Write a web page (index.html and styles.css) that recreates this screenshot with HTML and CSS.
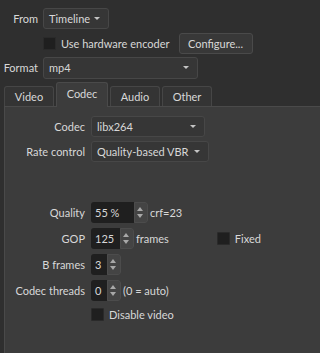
FILE: index.html
```html
<!DOCTYPE html>
<html lang="en">

<head>
    <meta charset="UTF-8">
    <meta name="viewport" content="width=device-width, initial-scale=1.0">
    <title>Export - Codec</title>
    <link rel="stylesheet" href="styles.css">
</head>

<body>
    <div class="top">
        <div class="row row-from">
            <span class="label">From</span>
            <div class="combo combo-from">Timeline <span class="arrow"></span></div>
        </div>
        <div class="row row-hw">
            <span class="check"></span>
            <span class="check-text">Use hardware encoder</span>
            <button class="btn">Configure...</button>
        </div>
        <div class="row row-format">
            <span class="label">Format</span>
            <div class="combo combo-format">mp4 <span class="arrow"></span></div>
        </div>
    </div>

    <div class="tabs">
        <div class="tab">Video</div>
        <div class="tab selected">Codec</div>
        <div class="tab">Audio</div>
        <div class="tab">Other</div>
    </div>

    <div class="pane">
        <!-- codec selection -->
        <div class="form form-codec">
            <span class="label">Codec</span>
            <div class="field">
                <div class="combo combo-codec">libx264 <span class="arrow"></span></div>
            </div>

            <span class="label">Rate control</span>
            <div class="field">
                <div class="combo combo-rate">Quality-based VBR <span class="arrow"></span></div>
            </div>
        </div>

        <!-- numeric settings -->
        <div class="form form-values">
            <span class="label">Quality</span>
            <div class="field">
                <div class="spin spin-quality"><span class="spin-value">55 %</span><span class="spin-btns"></span></div>
                <span class="suffix">crf=23</span>
            </div>

            <span class="label">GOP</span>
            <div class="field">
                <div class="spin spin-gop"><span class="spin-value">125</span><span class="spin-btns"></span></div>
                <span class="suffix">frames</span>
                <span class="check check-fixed"></span>
                <span class="check-text">Fixed</span>
            </div>

            <span class="label">B frames</span>
            <div class="field">
                <div class="spin spin-small"><span class="spin-value">3</span><span class="spin-btns"></span></div>
            </div>

            <span class="label">Codec threads</span>
            <div class="field">
                <div class="spin spin-small"><span class="spin-value">0</span><span class="spin-btns"></span></div>
                <span class="suffix">(0 = auto)</span>
            </div>

            <span class="label"></span>
            <div class="field field-check">
                <span class="check"></span>
                <span class="check-text">Disable video</span>
            </div>
        </div>
    </div>
</body>

</html>
```

FILE: styles.css
```css
body {
    margin: 0;
    padding: 0;
    background-color: #2f2f2f;
    color: #d8d8d8;
    font-family: Lato, "Open Sans", sans-serif;
    font-size: 11px;
    line-height: 14px;
    height: 353px;
    overflow: hidden;
    display: flex;
    flex-direction: column;
    white-space: nowrap;
}

.top {
    padding-top: 8px;
}

.row {
    display: flex;
    align-items: center;
}

.row .label {
    width: 38px;
    text-align: right;
    margin-right: 5px;
}

.row-from {
    height: 21px;
}

.row-hw {
    height: 21px;
    margin-top: 4px;
    padding-left: 43px;
}

.row-format {
    height: 22px;
    margin-top: 3px;
}

.combo {
    box-sizing: border-box;
    height: 21px;
    background: #363636;
    border: 1px solid #474747;
    border-radius: 3px;
    padding: 0 0 0 5px;
    display: flex;
    align-items: center;
    position: relative;
}

.arrow {
    position: absolute;
    right: 8px;
    top: 8px;
    width: 0;
    height: 0;
    border-left: 3px solid transparent;
    border-right: 3px solid transparent;
    border-top: 3px solid #c4c4c4;
}

.combo-from {
    width: 66px;
}

.combo-format {
    width: 155px;
    height: 22px;
}

.combo-codec {
    width: 114px;
}

.combo-rate {
    width: 118px;
}

.check {
    box-sizing: border-box;
    width: 13px;
    height: 13px;
    background: #1f1f1f;
    border: 1px solid #2a2a2a;
    border-radius: 1px;
    flex-shrink: 0;
}

.check-text {
    margin-left: 5px;
}

.btn {
    box-sizing: border-box;
    margin-left: 9px;
    height: 21px;
    width: 74px;
    padding: 0;
    background: #383838;
    border: 1px solid #4a4a4a;
    border-radius: 3px;
    color: #d8d8d8;
    font-family: inherit;
    font-size: inherit;
}

.tabs {
    display: flex;
    margin-top: 3px;
    padding-left: 4px;
    height: 24px;
    align-items: flex-end;
}

.tab {
    box-sizing: border-box;
    height: 20px;
    width: 50px;
    margin-right: 2px;
    background: #343434;
    border: 1px solid #464646;
    border-bottom: none;
    border-radius: 3px 3px 0 0;
    text-align: center;
    line-height: 19px;
}

.tab.selected {
    height: 25px;
    width: 52px;
    background: #3c3c3c;
    line-height: 22px;
    position: relative;
    top: 1px;
    border-color: #4a4a4a;
}

.pane {
    flex: 1;
    margin-left: 4px;
    background: #3c3c3c;
    border-top: 1px solid #4a4a4a;
    border-left: 1px solid #4a4a4a;
}

.form {
    display: grid;
    grid-template-columns: 80px auto;
    column-gap: 6px;
    align-items: center;
}

.form-codec {
    padding-top: 9px;
    row-gap: 4px;
}

.form-values {
    margin-top: 40px;
    row-gap: 5px;
}

.form .label {
    text-align: right;
}

.field {
    display: flex;
    align-items: center;
    height: 21px;
}

.field-check {
    height: 17px;
}

.spin {
    box-sizing: border-box;
    height: 21px;
    display: flex;
    border-radius: 3px;
    overflow: hidden;
}

.spin-value {
    flex: 1;
    background: #1f1f1f;
    padding-left: 4px;
    display: flex;
    align-items: center;
}

.spin-btns {
    width: 12px;
    background: #444444;
    border: 1px solid #4c4c4c;
    border-radius: 0 3px 3px 0;
    position: relative;
}

.spin-btns::before,
.spin-btns::after {
    content: "";
    position: absolute;
    left: 2px;
    border-left: 3px solid transparent;
    border-right: 3px solid transparent;
}

.spin-btns::before {
    top: 4px;
    border-bottom: 4px solid #a8a8a8;
}

.spin-btns::after {
    bottom: 4px;
    border-top: 4px solid #a8a8a8;
}

.spin-quality {
    width: 57px;
}

.spin-gop {
    width: 43px;
}

.spin-small {
    width: 30px;
}

.suffix {
    margin-left: 2px;
}

.check-fixed {
    margin-left: 48px;
}
```
